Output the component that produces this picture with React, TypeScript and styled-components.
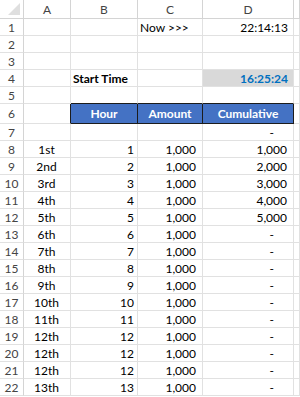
import React from 'react'
import styled, { createGlobalStyle } from 'styled-components'

const GlobalStyle = createGlobalStyle`
  html, body {
    margin: 0;
    padding: 0;
    background: #ffffff;
  }
  * {
    box-sizing: border-box;
  }
`

const GRID = '#e1e1e1'
const DARK = '#1c1c1c'

const Sheet = styled.div`
  display: grid;
  grid-template-columns: 24px 47px 67px 65px 91px 6px;
  grid-template-rows: 19px repeat(5, 17px) 20px repeat(16, 17px);
  width: 300px;
  height: 397px;
  overflow: hidden;
  font-family: Lato, 'Liberation Sans', sans-serif;
  font-size: 12px;
  color: #000;
  background: #fff;
`

const Corner = styled.div`
  position: relative;
  border-right: 1px solid #d4d4d4;
  border-bottom: 1px solid #d4d4d4;
  &::after {
    content: '';
    position: absolute;
    right: 3px;
    bottom: 3px;
    width: 0;
    height: 0;
    border-left: 12px solid transparent;
    border-bottom: 12px solid #dfdfdf;
  }
`

const ColHead = styled.div`
  display: flex;
  align-items: center;
  justify-content: center;
  color: #444;
  font-size: 12px;
  border-right: 1px solid #d4d4d4;
  border-bottom: 1px solid #d4d4d4;
`

const RowHead = styled.div`
  display: flex;
  align-items: center;
  justify-content: center;
  color: #444;
  font-size: 12px;
  border-right: 1px solid #d4d4d4;
  border-bottom: 1px solid ${GRID};
`

type Align = 'left' | 'center' | 'right'

const Cell = styled.div<{
  $align?: Align
  $bold?: boolean
  $bg?: string
  $color?: string
  $pr?: number
  $rightDark?: boolean
  $bottomDark?: boolean
}>`
  display: flex;
  align-items: center;
  justify-content: ${({ $align }) =>
    $align === 'right' ? 'flex-end' : $align === 'center' ? 'center' : 'flex-start'};
  padding: 0 ${({ $pr }) => ($pr ?? 3)}px 0 2px;
  font-weight: ${({ $bold }) => ($bold ? 700 : 400)};
  background: ${({ $bg }) => $bg ?? 'transparent'};
  color: ${({ $color }) => $color ?? '#000'};
  border-right: 1px solid ${({ $rightDark }) => ($rightDark ? DARK : GRID)};
  border-bottom: 1px solid ${({ $bottomDark }) => ($bottomDark ? DARK : GRID)};
  white-space: nowrap;
  overflow: visible;
`

const HeaderCell = styled(Cell)`
  background: #4472c4;
  color: #ffffff;
  font-weight: 700;
  justify-content: center;
  padding: 0;
`

const Dash = styled(Cell)`
  justify-content: flex-end;
  padding-right: 19px;
`

const ordinals = ['1st', '2nd', '3rd', '4th', '5th', '6th', '7th', '8th', '9th', '10th', '11th', '12th', '12th', '12th', '13th']
const hours = [1, 2, 3, 4, 5, 6, 7, 8, 9, 10, 11, 12, 12, 12, 13]
const cumulative = ['1,000', '2,000', '3,000', '4,000', '5,000']

export default function App() {
  return (
    <>
      <GlobalStyle />
      <Sheet>
        <Corner />
        <ColHead>A</ColHead>
        <ColHead>B</ColHead>
        <ColHead>C</ColHead>
        <ColHead>D</ColHead>
        <ColHead />

        {/* row 1 */}
        <RowHead>1</RowHead>
        <Cell />
        <Cell />
        <Cell>Now &gt;&gt;&gt;</Cell>
        <Cell $align="right" $pr={5}>22:14:13</Cell>
        <Cell />

        {[2, 3].map(n => (
          <React.Fragment key={n}>
            <RowHead>{n}</RowHead>
            <Cell />
            <Cell />
            <Cell />
            <Cell />
            <Cell />
          </React.Fragment>
        ))}

        {/* row 4 */}
        <RowHead>4</RowHead>
        <Cell />
        <Cell $bold>Start Time</Cell>
        <Cell />
        <Cell $align="right" $bold $bg="#d9d9d9" $color="#0070c0" $pr={5}>16:25:24</Cell>
        <Cell />

        {/* row 5 */}
        <RowHead>5</RowHead>
        <Cell />
        <Cell $bottomDark />
        <Cell $bottomDark />
        <Cell $bottomDark />
        <Cell />

        {/* row 6 */}
        <RowHead>6</RowHead>
        <Cell $rightDark />
        <HeaderCell $rightDark $bottomDark>Hour</HeaderCell>
        <HeaderCell $rightDark $bottomDark>Amount</HeaderCell>
        <HeaderCell $rightDark $bottomDark>Cumulative</HeaderCell>
        <Cell />

        {/* row 7 */}
        <RowHead>7</RowHead>
        <Cell />
        <Cell />
        <Cell />
        <Dash>-</Dash>
        <Cell />

        {ordinals.map((o, i) => (
          <React.Fragment key={i}>
            <RowHead>{i + 8}</RowHead>
            <Cell $align="center">{o}</Cell>
            <Cell $align="right">{hours[i]}</Cell>
            <Cell $align="right" $pr={6}>1,000</Cell>
            {cumulative[i] ? (
              <Cell $align="right" $pr={6}>{cumulative[i]}</Cell>
            ) : (
              <Dash>-</Dash>
            )}
            <Cell />
          </React.Fragment>
        ))}
      </Sheet>
    </>
  )
}
